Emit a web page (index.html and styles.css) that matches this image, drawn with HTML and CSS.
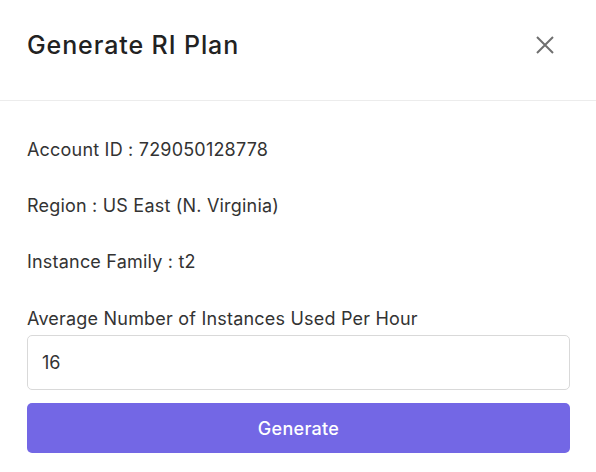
FILE: index.html
```html
<!DOCTYPE html>
<html>
<head>
<meta charset="utf-8">
<link rel="stylesheet" href="styles.css">
</head>
<body>
<div class="modal">
  <div class="modal-header">
    <h1 class="title">Generate RI Plan</h1>
    <button class="close" aria-label="Close">
      <svg width="18" height="18" viewBox="0 0 18 18"><path d="M1 1L17 17M17 1L1 17" stroke="#6f6f6f" stroke-width="2" fill="none"/></svg>
    </button>
  </div>
  <div class="modal-body">
    <p class="info">Account ID : 729050128778</p>
    <p class="info">Region : US East (N. Virginia)</p>
    <p class="info">Instance Family : t2</p>
    <label class="label" for="avg">Average Number of Instances Used Per Hour</label>
    <input id="avg" class="input" type="text" value="16">
    <button class="btn">Generate</button>
  </div>
</div>
</body>
</html>
```
FILE: styles.css
```css
* { box-sizing: border-box; }
body {
  margin: 0;
  background: #fff;
  font-family: Inter, "Open Sans", sans-serif;
  color: #333;
}
.modal { width: 596px; }
.modal-header {
  height: 101px;
  border-bottom: 1px solid #ececec;
  display: flex;
  align-items: center;
  justify-content: space-between;
  padding: 0 32px 10px 27px;
}
.title {
  margin: 0;
  font-size: 25px;
  font-weight: 500;
  letter-spacing: 0.9px;
  color: #222;
}
.close {
  border: 0;
  background: none;
  padding: 0;
  width: 38px;
  height: 38px;
  display: flex;
  align-items: center;
  justify-content: center;
  cursor: pointer;
}
.modal-body {
  padding: 37px 26px 0 27px;
  display: flex;
  flex-direction: column;
}
.info {
  margin: 0 0 32px;
  font-size: 18px;
  line-height: 24px;
  letter-spacing: 0.2px;
  color: #333;
}
.info:nth-of-type(3) { margin-bottom: 33px; }
.label {
  font-size: 18px;
  line-height: 24px;
  letter-spacing: 0.2px;
  color: #333;
  margin-bottom: 4px;
}
.input {
  height: 55px;
  border: 1px solid #d9d9d9;
  border-radius: 5px;
  padding: 0 14px;
  font-family: inherit;
  font-size: 18px;
  color: #333;
  outline: none;
}
.btn {
  margin-top: 13px;
  height: 50px;
  border: 0;
  border-radius: 5px;
  background: #7367e5;
  color: #fff;
  font-family: inherit;
  font-size: 18px;
  font-weight: 500;
  letter-spacing: 0.3px;
  cursor: pointer;
}
```
